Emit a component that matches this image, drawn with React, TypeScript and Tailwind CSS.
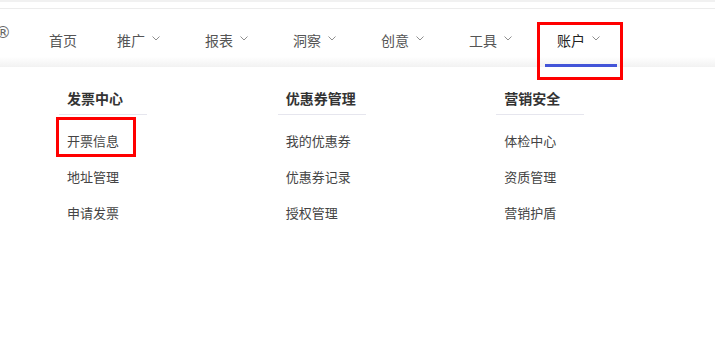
import React from "react";

const font = { fontFamily: '"Noto Sans CJK SC", "Noto Sans", sans-serif' };

function Chevron() {
  return (
    <svg width="8" height="5" viewBox="0 0 8 5" className="ml-[7px] mt-[-4px]">
      <polyline points="0.5,0.5 4,4 7.5,0.5" fill="none" stroke="#8f8f8f" strokeWidth="1" />
    </svg>
  );
}

const navItems = [
  { label: "首页", chevron: false, w: "w-[68px]" },
  { label: "推广", chevron: true, w: "w-[88px]" },
  { label: "报表", chevron: true, w: "w-[88px]" },
  { label: "洞察", chevron: true, w: "w-[88px]" },
  { label: "创意", chevron: true, w: "w-[88px]" },
  { label: "工具", chevron: true, w: "w-[88px]" },
];

const columns = [
  { title: "发票中心", items: ["开票信息", "地址管理", "申请发票"] },
  { title: "优惠券管理", items: ["我的优惠券", "优惠券记录", "授权管理"] },
  { title: "营销安全", items: ["体检中心", "资质管理", "营销护盾"] },
];

export default function App() {
  return (
    <div className="relative w-[715px] h-[355px] bg-white overflow-hidden" style={font}>
      <div className="h-[2px] bg-[#f1f1f1]" />
      <div className="h-[6px]" />
      <div className="h-[1px] bg-[#ececec]" />
      <nav className="relative h-[58px] bg-[linear-gradient(to_bottom,#ffffff_82%,#f2f2f2)]">
        <span
          className="absolute left-[-5px] top-[14px] text-[16px] leading-[20px] text-[#666]"
          style={{ fontFamily: '"DejaVu Sans", sans-serif' }}
        >
          ®
        </span>
        <div className="flex pl-[49px] pt-[21px]">
          {navItems.map((it) => (
            <div key={it.label} className={`${it.w} flex items-center text-[14px] leading-[20px] text-[#555]`}>
              <span>{it.label}</span>
              {it.chevron && <Chevron />}
            </div>
          ))}
          <div className="relative flex items-center text-[14px] leading-[20px] text-[#222]">
            <span>账户</span>
            <Chevron />
            <div className="absolute left-[-12px] top-[34px] w-[72px] h-[3px] bg-[#4355d8]" />
          </div>
        </div>
      </nav>
      <div className="flex pl-[59px] pt-[21px]">
        {columns.map((col) => (
          <div key={col.title} className="w-[220px]">
            <div className="w-[88px] border-b border-[#e6e6ee] pl-[8px] pb-[6px] text-[14px] leading-[20px] font-bold text-[#333] whitespace-nowrap">
              {col.title}
            </div>
            <div className="flex flex-col gap-[16px] pt-[16px] pl-[8px]">
              {col.items.map((t) => (
                <div key={t} className="text-[13px] leading-[20px] text-[#444]">
                  {t}
                </div>
              ))}
            </div>
          </div>
        ))}
      </div>
      <div className="absolute left-[537px] top-[22px] w-[86px] h-[58px] border-[3px] border-[#ff0000]" />
      <div className="absolute left-[56px] top-[117px] w-[80px] h-[40px] border-[3px] border-[#ff0000]" />
    </div>
  );
}
